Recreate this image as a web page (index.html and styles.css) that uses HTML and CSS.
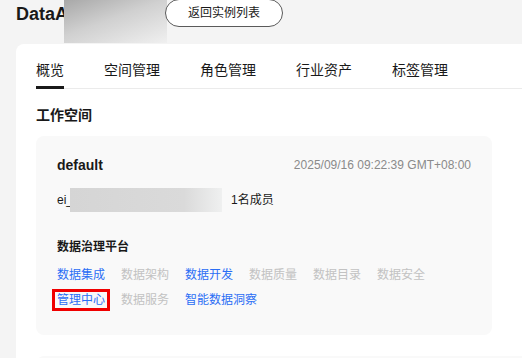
FILE: index.html
```html
<!DOCTYPE html>
<html lang="zh-CN">
<head>
    <meta charset="UTF-8">
    <meta name="viewport" content="width=device-width, initial-scale=1.0">
    <title>DataArts Studio</title>
    <link rel="stylesheet" href="styles.css">
</head>
<body>
    <div class="topbar">
        <div class="title">DataArts Studio</div>
        <div class="mask-title"></div>
        <a class="back-btn" href="#">返回实例列表</a>
    </div>
    <div class="card">
        <div class="tabs">
            <div class="tab active">概览</div>
            <div class="tab">空间管理</div>
            <div class="tab">角色管理</div>
            <div class="tab">行业资产</div>
            <div class="tab">标签管理</div>
        </div>
        <h2 class="section-title">工作空间</h2>
        <div class="space-card">
            <div class="space-head">
                <span class="space-name">default</span>
                <span class="space-time">2025/09/16 09:22:39 GMT+08:00</span>
            </div>
            <div class="space-owner">
                <span>ei_</span>
                <span class="mask-owner"></span>
                <span>1名成员</span>
            </div>
            <div class="platform-title">数据治理平台</div>
            <div class="links">
                <a class="link" href="#">数据集成</a>
                <span class="link disabled">数据架构</span>
                <a class="link" href="#">数据开发</a>
                <span class="link disabled">数据质量</span>
                <span class="link disabled">数据目录</span>
                <span class="link disabled">数据安全</span>
            </div>
            <div class="links">
                <a class="link marked" href="#">管理中心</a>
                <span class="link disabled">数据服务</span>
                <a class="link" href="#">智能数据洞察</a>
            </div>
        </div>
        <div class="space-card next"></div>
    </div>
</body>
</html>
```

FILE: styles.css
```css
body {
    font-family: "Liberation Sans", "Noto Sans CJK SC", sans-serif;
    background-color: #f4f4f4;
    color: #191919;
    margin: 0;
    overflow: hidden;
}
.topbar {
    position: relative;
    display: flex;
    align-items: center;
    height: 27px;
    padding-left: 16px;
    margin-bottom: 17px;
}
.title {
    width: 149px;
    font-size: 18px;
    font-weight: bold;
    line-height: 24px;
    white-space: nowrap;
}
.mask-title {
    position: absolute;
    left: 64px;
    top: 0;
    width: 103px;
    height: 43px;
    background: linear-gradient(160deg, #a8a8a8 0%, #d0d0d0 45%, #f0f0f0 100%);
}
.back-btn {
    position: relative;
    z-index: 1;
    box-sizing: border-box;
    width: 118px;
    height: 28px;
    margin-top: -1px;
    border: 1px solid #5a5a5a;
    border-radius: 14px;
    background-color: #ffffff;
    color: #191919;
    font-size: 12px;
    line-height: 26px;
    text-align: center;
    text-decoration: none;
}
.card {
    margin-left: 16px;
    background-color: #ffffff;
    border-radius: 8px 0 0 0;
    padding: 16px 0 0 20px;
    height: 298px;
    overflow: hidden;
}
.tabs {
    display: flex;
    gap: 40px;
    border-bottom: 1px solid #ebebeb;
}
.tab {
    font-size: 14px;
    line-height: 20px;
    padding-bottom: 6px;
    border-bottom: 3px solid transparent;
    margin-bottom: -1px;
}
.tab.active {
    border-bottom-color: #191919;
}
.section-title {
    margin: 16px 0 11px;
    font-size: 14px;
    font-weight: bold;
    line-height: 20px;
}
.space-card {
    width: 456px;
    box-sizing: border-box;
    background-color: #f9f9f9;
    border-radius: 8px;
    padding: 19px 21px 25px;
}
.space-card.next {
    width: 520px;
    height: 40px;
    margin-top: 21px;
}
.space-head {
    display: flex;
    justify-content: space-between;
    align-items: center;
    line-height: 20px;
}
.space-name {
    font-size: 14px;
    font-weight: bold;
}
.space-time {
    font-size: 12px;
    color: #8a8a8a;
}
.space-owner {
    display: flex;
    align-items: center;
    margin-top: 13px;
    font-size: 12px;
    line-height: 20px;
}
.mask-owner {
    width: 152px;
    height: 24px;
    margin: 0 9px 0 -3px;
    background: linear-gradient(90deg, #d5d5d5 0%, #dadada 75%, #eff0f0 100%);
}
.platform-title {
    margin-top: 25px;
    font-size: 12px;
    font-weight: bold;
    line-height: 20px;
}
.links {
    display: flex;
    gap: 16px;
    margin-top: 5px;
}
.platform-title + .links {
    margin-top: 8px;
}
.link {
    font-size: 12px;
    line-height: 20px;
    color: #2b6ef5;
    text-decoration: none;
}
.link.disabled {
    color: #c2c2c2;
}
.link.marked {
    position: relative;
}
.link.marked::after {
    content: "";
    position: absolute;
    top: -1px;
    bottom: -1px;
    left: -5px;
    right: -5px;
    border: 3px solid #f00000;
}
```
